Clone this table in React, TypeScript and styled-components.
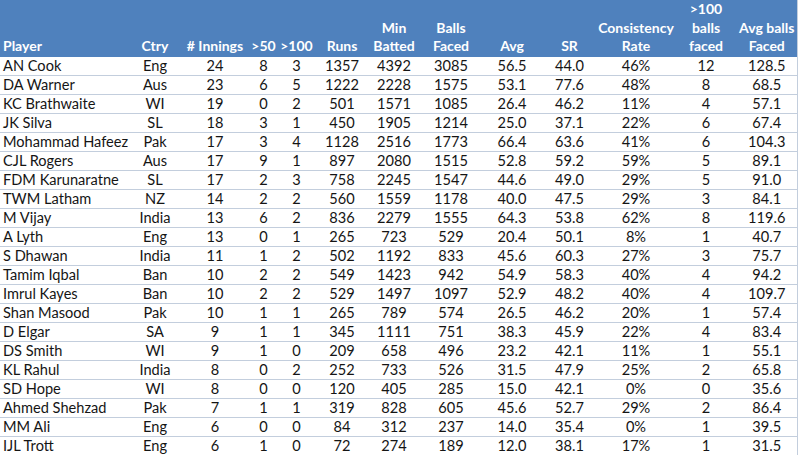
import React from "react";
import styled, { createGlobalStyle } from "styled-components";

const Global = createGlobalStyle`
  html, body { margin: 0; padding: 0; background: #ffffff; }
  body { font-family: Lato, "Open Sans", sans-serif; }
`;

type Row = [string, string, number, number, number, number, number, number, string, string, string, number, string];

const rows: Row[] = [
  ["AN Cook", "Eng", 24, 8, 3, 1357, 4392, 3085, "56.5", "44.0", "46%", 12, "128.5"],
  ["DA Warner", "Aus", 23, 6, 5, 1222, 2228, 1575, "53.1", "77.6", "48%", 8, "68.5"],
  ["KC Brathwaite", "WI", 19, 0, 2, 501, 1571, 1085, "26.4", "46.2", "11%", 4, "57.1"],
  ["JK Silva", "SL", 18, 3, 1, 450, 1905, 1214, "25.0", "37.1", "22%", 6, "67.4"],
  ["Mohammad Hafeez", "Pak", 17, 3, 4, 1128, 2516, 1773, "66.4", "63.6", "41%", 6, "104.3"],
  ["CJL Rogers", "Aus", 17, 9, 1, 897, 2080, 1515, "52.8", "59.2", "59%", 5, "89.1"],
  ["FDM Karunaratne", "SL", 17, 2, 3, 758, 2245, 1547, "44.6", "49.0", "29%", 5, "91.0"],
  ["TWM Latham", "NZ", 14, 2, 2, 560, 1559, 1178, "40.0", "47.5", "29%", 3, "84.1"],
  ["M Vijay", "India", 13, 6, 2, 836, 2279, 1555, "64.3", "53.8", "62%", 8, "119.6"],
  ["A Lyth", "Eng", 13, 0, 1, 265, 723, 529, "20.4", "50.1", "8%", 1, "40.7"],
  ["S Dhawan", "India", 11, 1, 2, 502, 1192, 833, "45.6", "60.3", "27%", 3, "75.7"],
  ["Tamim Iqbal", "Ban", 10, 2, 2, 549, 1423, 942, "54.9", "58.3", "40%", 4, "94.2"],
  ["Imrul Kayes", "Ban", 10, 2, 2, 529, 1497, 1097, "52.9", "48.2", "40%", 4, "109.7"],
  ["Shan Masood", "Pak", 10, 1, 1, 265, 789, 574, "26.5", "46.2", "20%", 1, "57.4"],
  ["D Elgar", "SA", 9, 1, 1, 345, 1111, 751, "38.3", "45.9", "22%", 4, "83.4"],
  ["DS Smith", "WI", 9, 1, 0, 209, 658, 496, "23.2", "42.1", "11%", 1, "55.1"],
  ["KL Rahul", "India", 8, 0, 2, 252, 733, 526, "31.5", "47.9", "25%", 2, "65.8"],
  ["SD Hope", "WI", 8, 0, 0, 120, 405, 285, "15.0", "42.1", "0%", 0, "35.6"],
  ["Ahmed Shehzad", "Pak", 7, 1, 1, 319, 828, 605, "45.6", "52.7", "29%", 2, "86.4"],
  ["MM Ali", "Eng", 6, 0, 0, 84, 312, 237, "14.0", "35.4", "0%", 1, "39.5"],
  ["IJL Trott", "Eng", 6, 1, 0, 72, 274, 189, "12.0", "38.1", "17%", 1, "31.5"],
];

const headers: string[][] = [
  ["Player"],
  ["Ctry"],
  ["# Innings"],
  [">50"],
  [">100"],
  ["Runs"],
  ["Min", "Batted"],
  ["Balls", "Faced"],
  ["Avg"],
  ["SR"],
  ["Consistency", "Rate"],
  [">100", "balls", "faced"],
  ["Avg balls", "Faced"],
];

const widths = [130, 50, 70, 27, 39, 52, 52, 62, 60, 55, 78, 62, 60];

const Table = styled.table`
  width: 797px;
  border-collapse: collapse;
  table-layout: fixed;
  font-size: 14.6px;
  color: #151515;
  border-right: 1px solid #c3cedd;
`;

const HeadRow = styled.tr`
  background: #4f81bd;
  height: 54px;
`;

const Th = styled.th<{ $left?: boolean }>`
  color: #ffffff;
  font-size: 14px;
  font-weight: 700;
  text-align: ${(p) => (p.$left ? "left" : "center")};
  vertical-align: bottom;
  padding: 0 0 1px ${(p) => (p.$left ? "3px" : "0")};
  line-height: 18.5px;
  white-space: nowrap;
`;

const BodyRow = styled.tr`
  height: 19px;
  border-bottom: 1px solid #c3cedd;
`;

const Td = styled.td<{ $left?: boolean }>`
  text-align: ${(p) => (p.$left ? "left" : "center")};
  padding: 0 0 0 ${(p) => (p.$left ? "3px" : "0")};
  line-height: 18px;
  white-space: nowrap;
  overflow: hidden;
`;

export default function App() {
  return (
    <>
      <Global />
      <Table>
        <colgroup>
          {widths.map((w, i) => (
            <col key={i} style={{ width: w }} />
          ))}
        </colgroup>
        <thead>
          <HeadRow>
            {headers.map((h, i) => (
              <Th key={i} $left={i === 0}>
                {h.map((line, j) => (
                  <React.Fragment key={j}>
                    {j > 0 && <br />}
                    {line}
                  </React.Fragment>
                ))}
              </Th>
            ))}
          </HeadRow>
        </thead>
        <tbody>
          {rows.map((r) => (
            <BodyRow key={r[0]}>
              {r.map((c, i) => (
                <Td key={i} $left={i === 0}>
                  {c}
                </Td>
              ))}
            </BodyRow>
          ))}
        </tbody>
      </Table>
    </>
  );
}
